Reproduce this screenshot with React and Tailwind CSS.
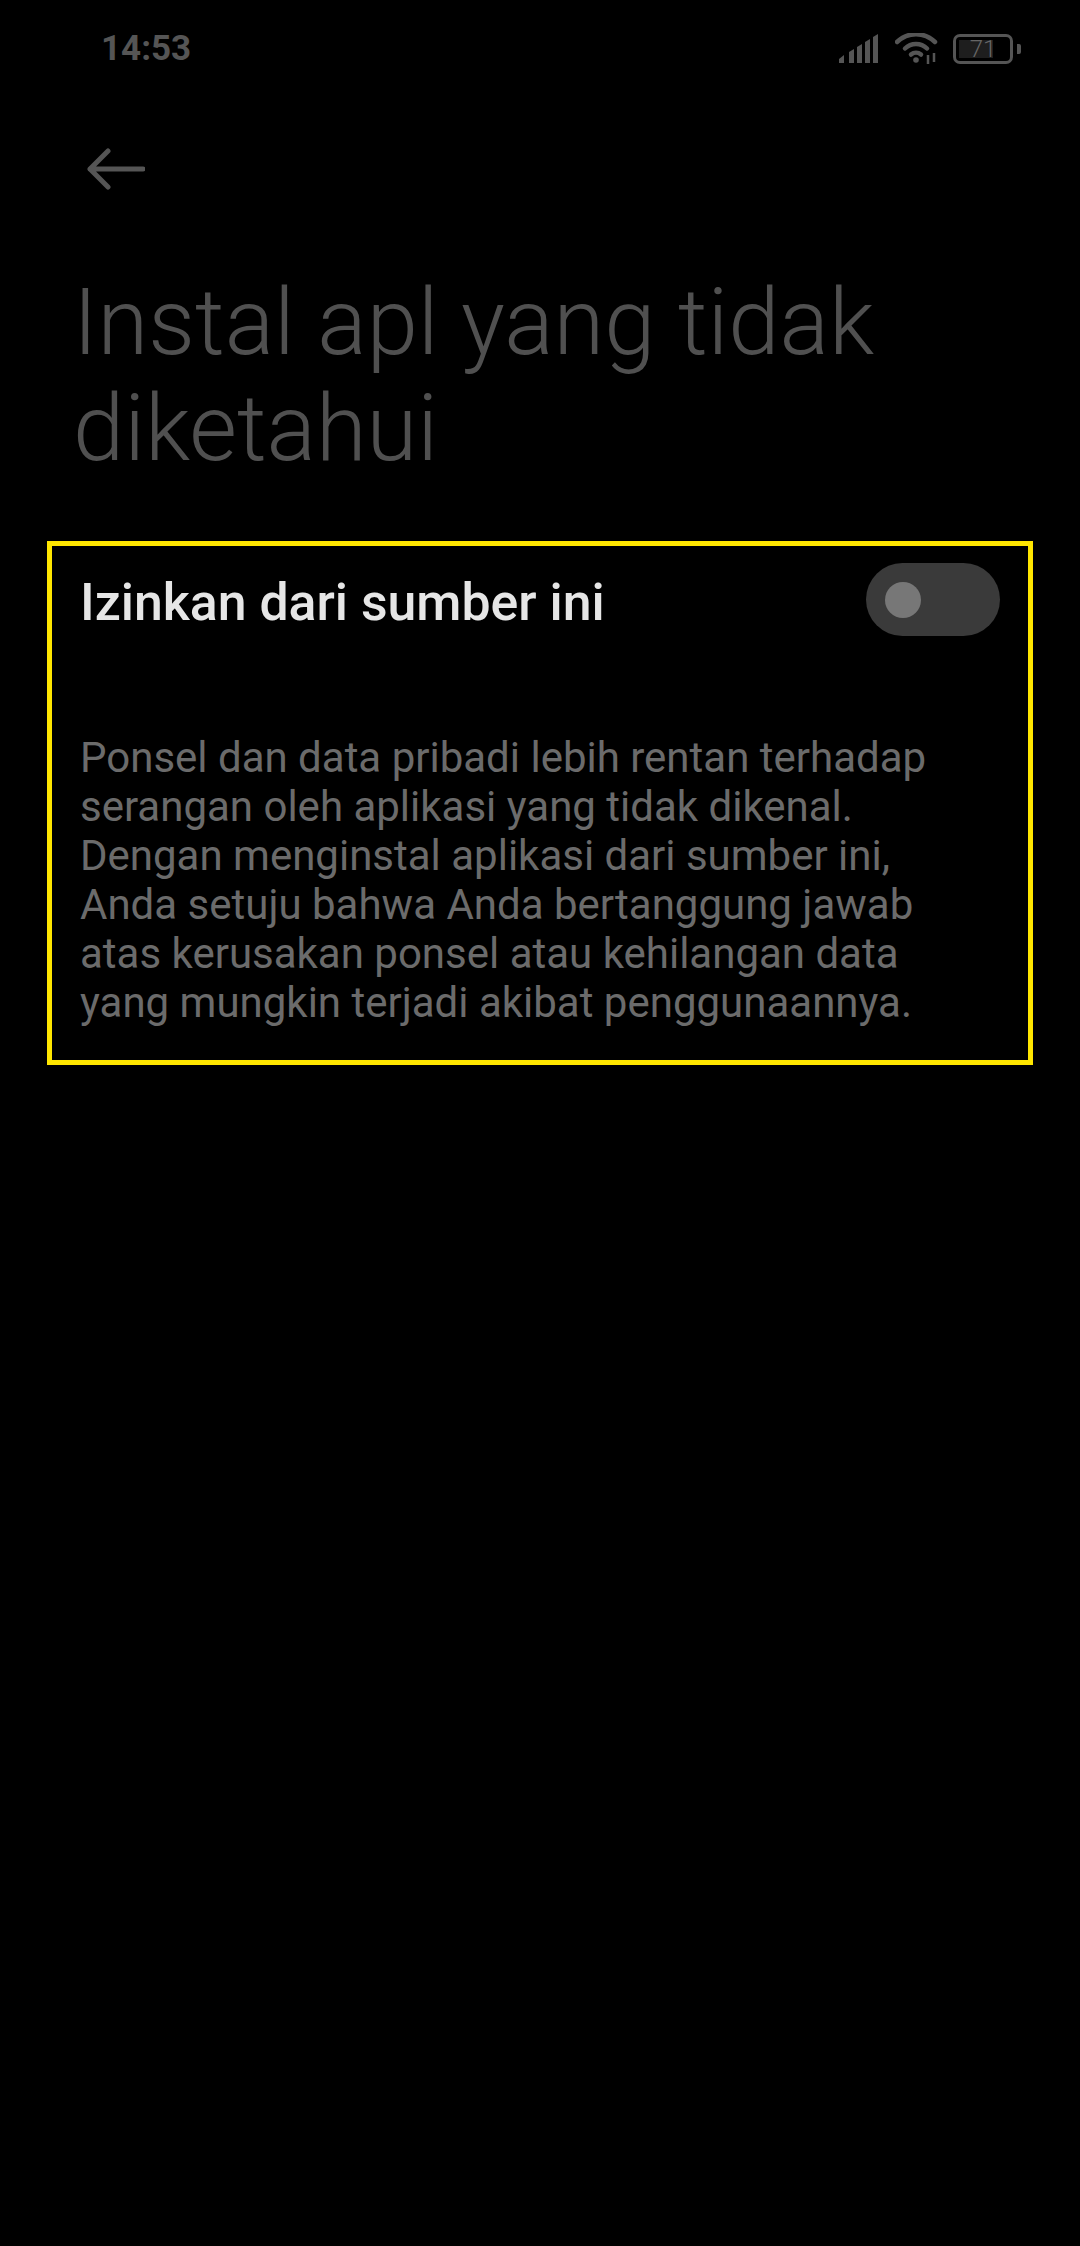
import React from 'react';

function SignalIcon() {
  return (
    <svg width="42" height="30" viewBox="0 0 42 30" fill="#555555">
      <path d="M1 25 L6 21 V29 H1 Z" />
      <path d="M11 18 L16 15 V29 H11 Z" />
      <path d="M19 13 L24 10 V29 H19 Z" />
      <path d="M27 8 L32 5 V29 H27 Z" />
      <path d="M35 3 L40 0 V29 H35 Z" />
    </svg>
  );
}

function WifiIcon() {
  return (
    <svg width="44" height="32" viewBox="0 0 44 32" fill="none" stroke="#555555" strokeWidth="4.5" strokeLinecap="round">
      <path d="M2 9 C13 -1.5 29 -1.5 40 9" />
      <path d="M10 15.5 C16 9.5 26 9.5 32 15.5" />
      <path d="M16 21.5 C19 19 23 19 26 21.5" />
      <circle cx="21" cy="27" r="2.8" fill="#555555" stroke="none" />
      <path d="M33 22 V31 M39 20 V29" strokeWidth="2.5" strokeLinecap="butt" />
    </svg>
  );
}

function BatteryIcon() {
  return (
    <div className="flex items-center gap-[4px]">
      <div className="w-[60px] h-[30px] rounded-[7px] border-[3px] border-[#555555] p-[3px] relative flex">
        <div className="w-[34px] bg-[#1e1e1e]"></div>
        <span className="absolute inset-0 flex items-center justify-center text-[24px] leading-none font-light text-[#666666]">71</span>
      </div>
      <div className="w-[4px] h-[10px] rounded-r-[2px] bg-[#555555]"></div>
    </div>
  );
}

export default function App() {
  return (
    <div className="w-[1080px] h-[2246px] bg-black overflow-hidden font-['Roboto',sans-serif]">
      {/* Status bar */}
      <div className="flex items-center justify-between pl-[101px] pr-[59px] pt-[32px] h-[66px]">
        <span className="text-[35px] leading-[36px] font-bold text-[#555555]">14:53</span>
        <div className="flex items-center">
          <SignalIcon />
          <div className="ml-[15px]"><WifiIcon /></div>
          <div className="ml-[14px]"><BatteryIcon /></div>
        </div>
      </div>

      {/* Back arrow */}
      <div className="pl-[87px] mt-[82px] h-[42px]">
        <svg width="58" height="42" viewBox="0 0 58 42" fill="none" stroke="#555555" strokeWidth="5" strokeLinecap="round" strokeLinejoin="round">
          <path d="M56 21 H3 M21 3 L3 21 L21 39" />
        </svg>
      </div>

      <h1 className="ml-[73px] mt-[80px] text-[92.2px] leading-[106px] font-light text-[#505050]">
        Instal apl yang tidak
        <br />
        diketahui
      </h1>

      {/* Highlighted option */}
      <div className="ml-[47px] mt-[59px] w-[986px] h-[524px] border-[5px] border-[#ffe600] pl-[28px] pr-[28px] pt-[17px]">
        <div className="flex items-start justify-between">
          <span className="mt-[10px] text-[51.8px] leading-[60px] font-medium text-[#e6e6e6]">Izinkan dari sumber ini</span>
          <div className="w-[134px] h-[73px] rounded-full bg-[#3a3a3a] flex items-center pl-[19px]">
            <div className="w-[36px] h-[36px] rounded-full bg-[#777777]"></div>
          </div>
        </div>
        <p className="mt-[97px] text-[42px] leading-[49px] text-[#6b6b6b]">
          Ponsel dan data pribadi lebih rentan terhadap
          <br />
          serangan oleh aplikasi yang tidak dikenal.
          <br />
          Dengan menginstal aplikasi dari sumber ini,
          <br />
          Anda setuju bahwa Anda bertanggung jawab
          <br />
          atas kerusakan ponsel atau kehilangan data
          <br />
          yang mungkin terjadi akibat penggunaannya.
        </p>
      </div>
    </div>
  );
}
